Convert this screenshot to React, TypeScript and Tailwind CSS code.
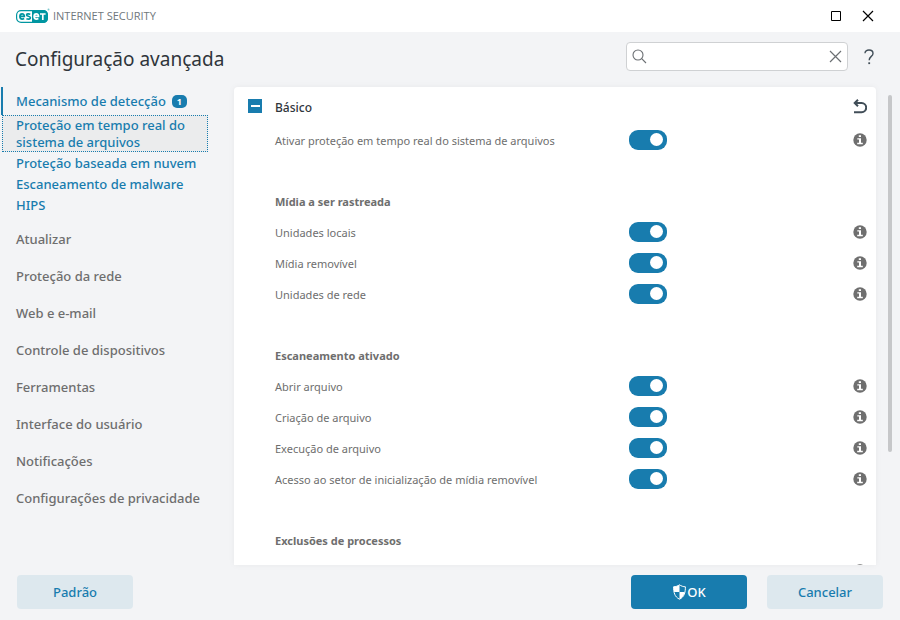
import { useState } from "react";

const SUB_ITEMS = ["Proteção baseada em nuvem", "Escaneamento de malware", "HIPS"];

const NAV_ITEMS = [
  "Atualizar",
  "Proteção da rede",
  "Web e e-mail",
  "Controle de dispositivos",
  "Ferramentas",
  "Interface do usuário",
  "Notificações",
  "Configurações de privacidade",
];

const GROUPS = [
  { title: "", rows: ["Ativar proteção em tempo real do sistema de arquivos"] },
  { title: "Mídia a ser rastreada", rows: ["Unidades locais", "Mídia removível", "Unidades de rede"] },
  {
    title: "Escaneamento ativado",
    rows: [
      "Abrir arquivo",
      "Criação de arquivo",
      "Execução de arquivo",
      "Acesso ao setor de inicialização de mídia removível",
    ],
  },
];

function Logo() {
  return (
    <svg width="34" height="16" viewBox="0 0 34 16" role="img" aria-label="eset">
      <rect x="0.6" y="2.6" width="30.8" height="11.8" rx="4.5" fill="#fff" stroke="#0096a1" strokeWidth="1.2" />
      <path d="M16 2H27.5a4.5 4.5 0 0 1 4.5 4.5v4a4.5 4.5 0 0 1-4.5 4.5H16z" fill="#0096a1" />
      <g fill="none" strokeWidth="1.7">
        <path d="M4 8.400h4.300c0-1.600-.8-2.500-2.200-2.500S3.900 7 3.900 8.500s.8 2.600 2.300 2.600c.8 0 1.400-.2 2-.5" stroke="#0096a1" />
        <path d="M14.300 6.200c-1.500-.5-3.700-.5-3.700.8 0 1.600 3.800 1 3.800 2.800 0 1.500-2.300 1.500-4 .9" stroke="#0096a1" />
        <path d="M18.200 8.400h4.300c0-1.600-.8-2.500-2.200-2.500S18.100 7 18.100 8.500s.8 2.600 2.300 2.600c.8 0 1.400-.2 2-.5M24 6h5.600M26.800 6v5.900" stroke="#fff" />
      </g>
      <circle cx="32.5" cy="1.5" r="1" fill="#7fc9cf" />
    </svg>
  );
}

function InfoIcon() {
  return (
    <svg width="14" height="14" viewBox="0 0 14 14" aria-hidden="true">
      <circle cx="7" cy="7" r="6.7" fill="#6f6f6f" />
      <path d="M5.800 2.200h2.200v1.900H5.800zM4.300 5.200H8v4.600h1.800v1.400H4.200V9.800H6V6.600H4.300z" fill="#fff" />
    </svg>
  );
}

function GroupTitle({ children }: { children: string }) {
  return (
    <h3 className="flex h-[31px] items-center pt-[2px] pl-[41px] text-[11px] leading-4 font-bold text-[#6e6e6e]">
      {children}
    </h3>
  );
}

function SettingRow({ label }: { label: string }) {
  const [on, setOn] = useState(true);
  return (
    <div className="flex h-[31px] shrink-0 items-center pr-[9px] pl-[41px]">
      <label className="flex flex-1 items-center text-[11px] leading-4 text-[#6e6e6e]">
        <span className="w-[354px] pt-[2px]">{label}</span>
        <input
          type="checkbox"
          role="switch"
          checked={on}
          onChange={() => setOn(!on)}
          className="flex h-5 w-[38px] appearance-none items-center justify-start rounded-[9px] bg-[#9aa3a8] px-1 before:block before:size-[13px] before:rounded-full before:bg-white checked:justify-end checked:bg-[#187cae]"
        />
      </label>
      <button type="button" aria-label={"Informações: " + label}>
        <InfoIcon />
      </button>
    </div>
  );
}

export default function App() {
  return (
    <div className="flex h-screen flex-col bg-[#f3f4f6] font-['Noto_Sans','Open_Sans',sans-serif]">
      <header className="flex h-8 shrink-0 items-center bg-white pr-[26px] pl-4">
        <Logo />
        <span className="ml-[3px] font-['Open_Sans',sans-serif] text-[11px] text-[#70777c]">INTERNET SECURITY</span>
        <div className="ml-auto flex items-center gap-5 text-black">
          <button type="button" aria-label="Maximizar">
            <svg width="12" height="12" viewBox="0 0 12 12" fill="none" stroke="currentColor">
              <path d="M1.500 1.500h9v9h-9z" />
            </svg>
          </button>
          <button type="button" aria-label="Fechar">
            <svg width="12" height="12" viewBox="0 0 12 12" fill="none" stroke="currentColor" strokeWidth="1.2">
              <path d="M1 1l10 10M11 1L1 11" />
            </svg>
          </button>
        </div>
      </header>

      <div className="flex h-[55px] shrink-0 items-center pr-[25px] pl-[15px]">
        <h1 className="text-[19px] text-[#2f353b]">Configuração avançada</h1>
        <div className="mb-[6px] ml-auto flex h-[29px] w-[222px] items-center rounded-[4px] border border-[#cfd1d3] bg-white px-[5px]">
          <svg width="15" height="15" viewBox="0 0 15 15" fill="none" stroke="#6b6f73" strokeWidth="1.1">
            <circle cx="6" cy="6" r="5" />
            <path d="M9.700 9.700l4.300 4.300" />
          </svg>
          <input type="text" aria-label="Pesquisar" className="min-w-0 flex-1 px-2 text-xs outline-none" />
          <button type="button" aria-label="Limpar">
            <svg width="13" height="13" viewBox="0 0 13 13" fill="none" stroke="#6b6f73" strokeWidth="1.2">
              <path d="M1 1l11 11M12 1L1 12" />
            </svg>
          </button>
        </div>
        <button type="button" aria-label="Ajuda" className="mb-[6px] ml-[15px]">
          <svg width="12" height="16" viewBox="0 0 12 16" fill="none" stroke="#414e58" strokeWidth="1.4">
            <path d="M2 4.200C2 2 3.800 1 6 1s4 1.200 4 3.400C10 7.600 6.200 7.200 6.200 11.300" />
            <path d="M5.300 14.200h1.800" strokeWidth="1.8" />
          </svg>
        </button>
      </div>

      <div className="flex min-h-0 flex-1">
        <nav className="w-[234px] shrink-0 text-[13px] font-medium text-[#187cae]">
          <a href="#deteccao" className="ml-px flex h-7 items-center border-l-2 border-[#187cae] pt-px pl-[13px]">
            Mecanismo de detecção
            <span className="ml-[6px] flex h-[13px] w-[15px] items-center justify-center rounded-[5px] bg-[#187cae] text-[9px] font-bold text-white">
              1
            </span>
          </a>
          <a
            href="#tempo-real"
            className="ml-[2px] block w-[206px] border border-dotted border-[#187cae] bg-[#ebeced] pt-px pl-[13px] leading-[17px]"
          >
            Proteção em tempo real do sistema de arquivos
          </a>
          <ul className="pt-px pl-4">
            {SUB_ITEMS.map((item) => (
              <li key={item} className="flex h-[21px] items-center">
                <a href="#sub">{item}</a>
              </li>
            ))}
          </ul>
          <ul className="pt-[5px] pl-4 text-[#6e6e6e]">
            {NAV_ITEMS.map((item) => (
              <li key={item} className="flex h-[37px] items-center">
                <a href="#item">{item}</a>
              </li>
            ))}
          </ul>
        </nav>

        <main className="flex min-w-0 flex-1 flex-col overflow-hidden rounded-t-[4px] bg-white shadow-[0_0_6px_rgba(0,0,0,0.05)]">
          <div className="flex h-[37px] shrink-0 items-center pt-px pr-[9px] pl-[14px]">
            <button type="button" aria-label="Recolher Básico" className="flex size-[14px] items-center justify-center bg-[#187cae]">
              <span className="h-[2px] w-[9px] bg-white" />
            </button>
            <h2 className="ml-[13px] pt-[3px] text-xs font-medium text-[#2f353b]">Básico</h2>
            <button type="button" aria-label="Reverter" className="ml-auto">
              <svg width="14" height="15" viewBox="0 0 14 15" fill="none" stroke="#414e58" strokeWidth="2">
                <path d="M2 4H8.600a4.600 4.600 0 0 1 0 9.200H1" />
                <path d="M5 0.800L1.700 4 5 7.200" />
              </svg>
            </button>
          </div>
          {GROUPS.map((group) => (
            <section key={group.title} className="flex shrink-0 flex-col pb-[30px]">
              {group.title && <GroupTitle>{group.title}</GroupTitle>}
              {group.rows.map((row) => (
                <SettingRow key={row} label={row} />
              ))}
            </section>
          ))}
          <section className="shrink-0">
            <GroupTitle>Exclusões de processos</GroupTitle>
            <div className="flex h-[31px] items-center justify-end pr-[9px]">
              <button type="button" aria-label="Informações: Exclusões de processos">
                <InfoIcon />
              </button>
            </div>
          </section>
        </main>
        <div className="w-6 shrink-0 pt-2 pl-3">
          <div className="h-[76%] w-1 rounded-full bg-[#c6c7c9]" />
        </div>
      </div>

      <footer className="flex h-[55px] shrink-0 items-start gap-5 px-[17px] pt-[10px] text-[13px] font-medium">
        <button type="button" className="mr-auto h-[34px] w-[116px] rounded-[4px] bg-[#dde8ee] pt-px text-[#187cae]">
          Padrão
        </button>
        <button type="button" className="flex h-[34px] w-[116px] items-center justify-center rounded-[4px] bg-[#187cae] text-white">
          <svg width="15" height="16" viewBox="0 0 15 16">
            <path d="M7.500 0.800C9 2 11.500 2.800 13.400 2.800c0 5.500-.9 10-5.900 12.400C2.500 12.800 1.600 8.300 1.600 2.800 3.500 2.800 6 2 7.500 0.800z" fill="none" stroke="#fff" />
            <path d="M7.500 0.800V8H2.200C1.700 6.300 1.600 4.500 1.600 2.800 3.500 2.800 6 2 7.500 0.800zM7.500 8h5.300c-.8 3.200-2.300 5.700-5.300 7.200z" fill="#fff" />
          </svg>
          <span className="pt-px">OK</span>
        </button>
        <button type="button" className="h-[34px] w-[116px] rounded-[4px] bg-[#dde8ee] pt-px text-[#187cae]">
          Cancelar
        </button>
      </footer>
    </div>
  );
}
